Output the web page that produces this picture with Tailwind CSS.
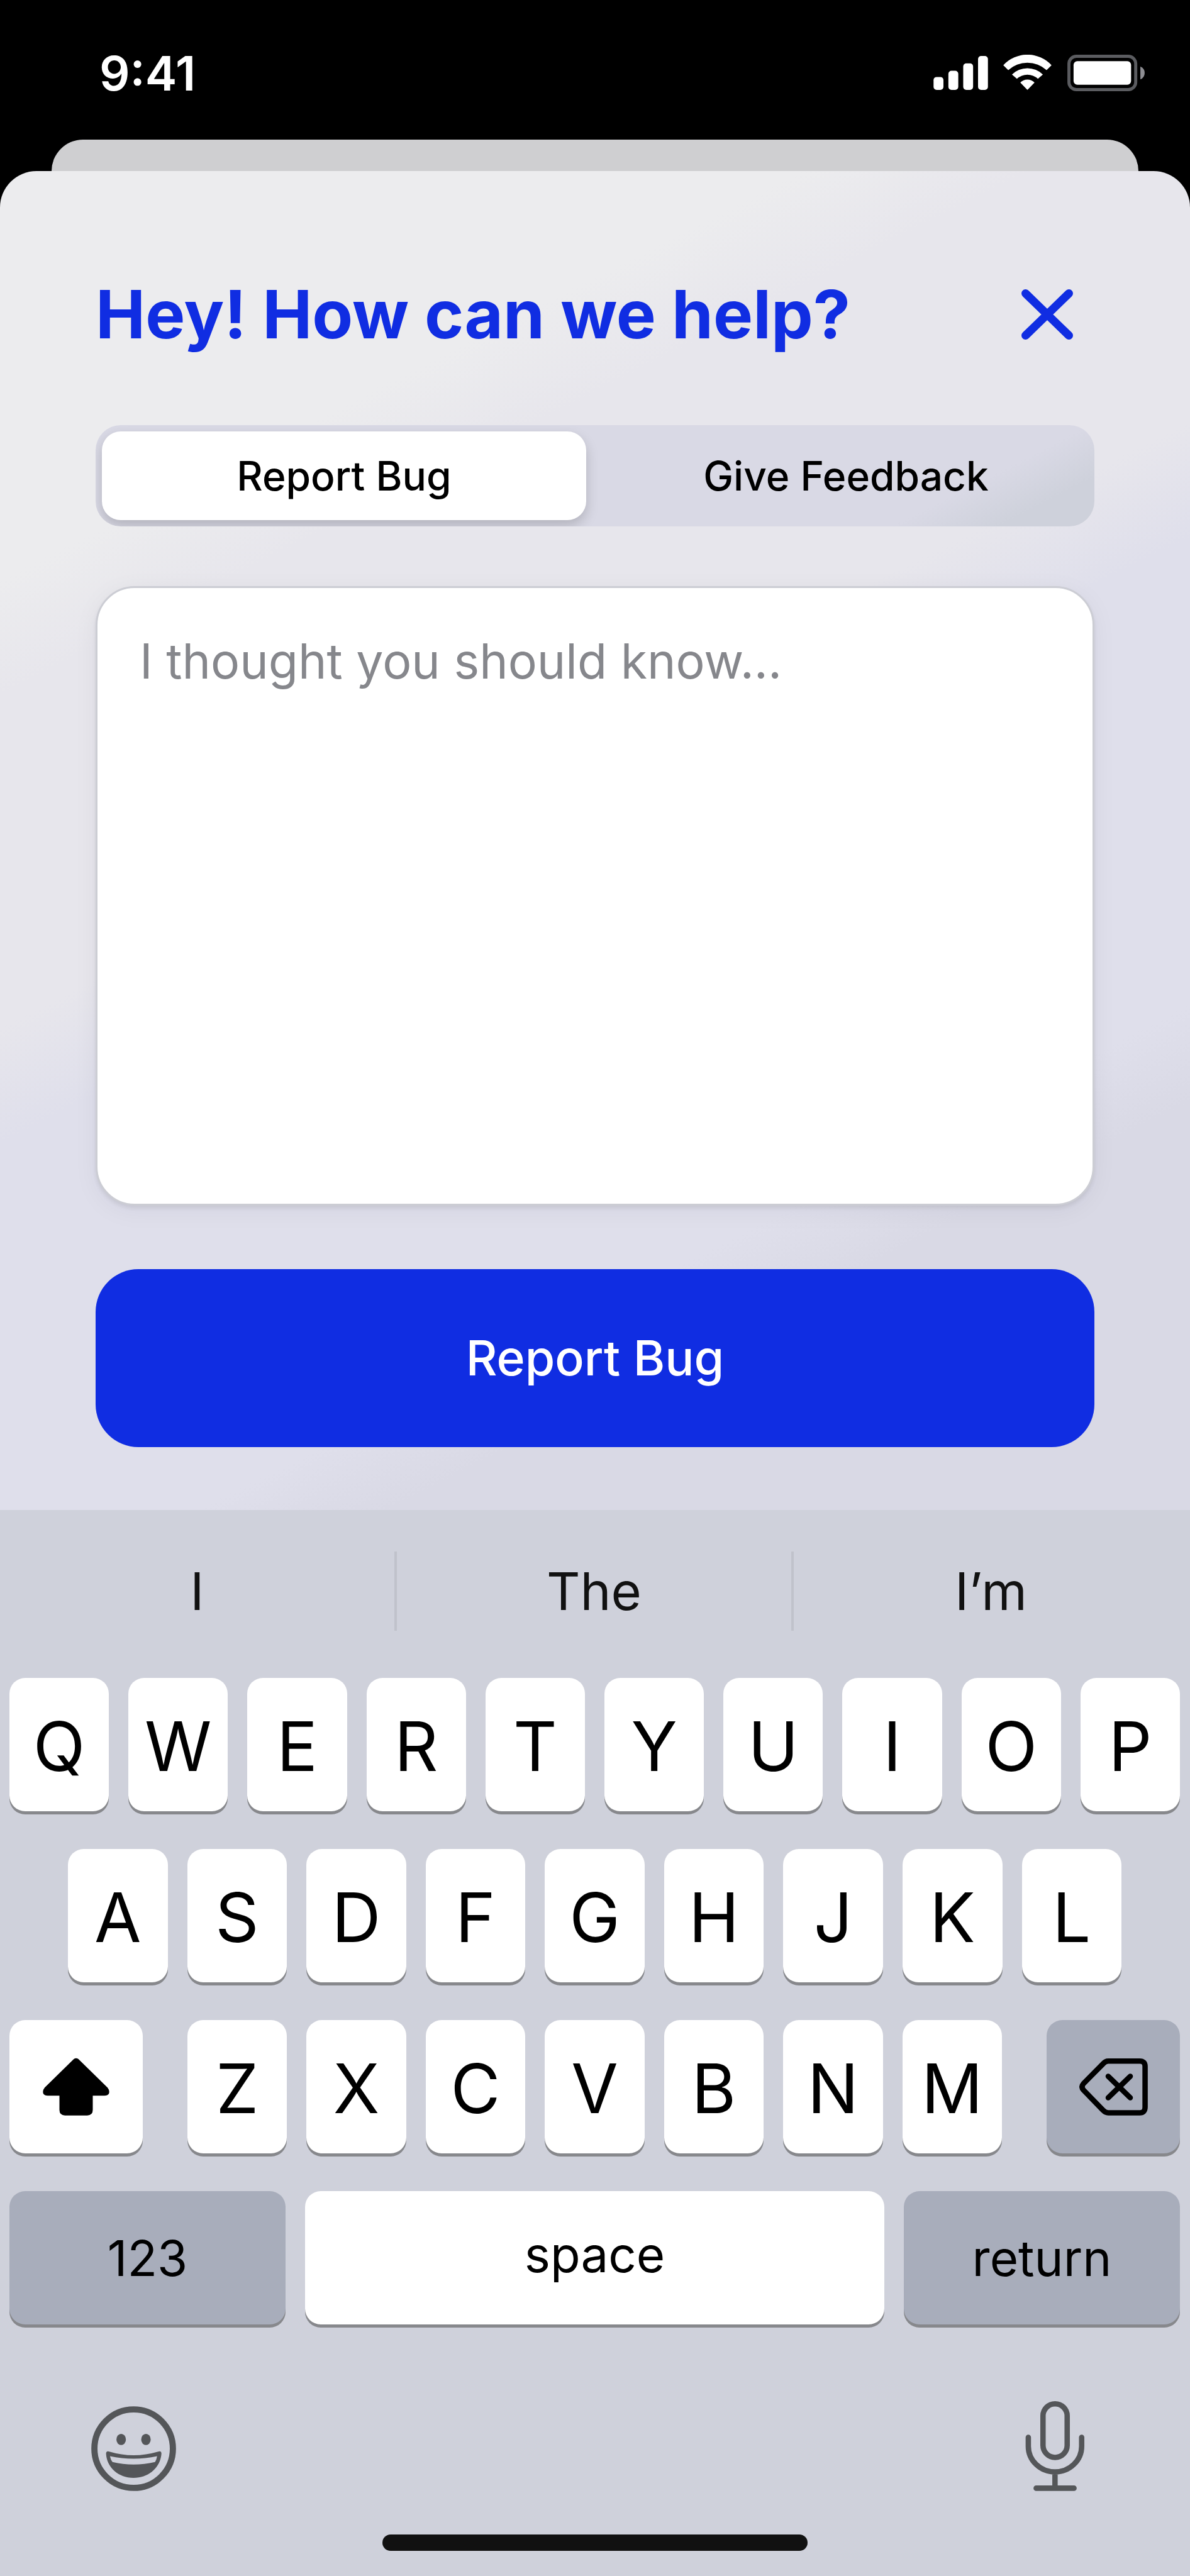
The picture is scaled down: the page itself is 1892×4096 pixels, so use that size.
<!DOCTYPE html>
<html lang="en">
<head>
    <meta charset="UTF-8">
    <meta name="viewport" content="width=device-width, initial-scale=1.0">
    <title>Report Bug</title>
    <script src="https://cdn.jsdelivr.net/npm/@tailwindcss/browser@4"></script>
</head>
<body class="flex flex-col min-h-screen bg-black font-['Inter','Liberation_Sans',sans-serif]">

    <!-- Status bar -->
    <header class="flex justify-between items-start h-[222px] pt-[87px] pl-[158px] pr-[72px] text-white">
        <span class="text-[76px] leading-[58px] font-semibold">9:41</span>
        <div class="flex items-end gap-6">
            <svg class="w-[87px] h-[56px]" viewBox="0 0 88 57" fill="currentColor">
                <rect x="0" y="34" width="16" height="21" rx="5"/>
                <rect x="24" y="24" width="16" height="31" rx="5"/>
                <rect x="48" y="12" width="16" height="43" rx="5"/>
                <rect x="72" y="0" width="16" height="55" rx="5"/>
            </svg>
            <svg class="w-[78px] h-[58px]" viewBox="0 0 79 59" fill="currentColor">
                <path d="M0 17A53 53 0 0 1 78 17L70 25A46 46 0 0 0 8 25Z"/>
                <path d="M14 32A36 36 0 0 1 64 32L56 39A25 25 0 0 0 22 39Z"/>
                <path d="M27.500 45A16 16 0 0 1 50.500 45L40 56Q39 57.500 38 56Z"/>
            </svg>
            <svg class="w-[123px] h-[58px]" viewBox="0 0 125 59">
                <rect x="2.500" y="2.500" width="108" height="54" rx="12" fill="none" stroke="#5b5c60" stroke-width="5"/>
                <rect x="10" y="10.500" width="93" height="38" rx="6" fill="#fff"/>
                <path d="M118 19Q125 22 125 29.500T118 40Z" fill="#8e8e93"/>
            </svg>
        </div>
    </header>

    <!-- Card behind the sheet -->
    <div class="h-[50px] mx-[82px] rounded-t-[50px] bg-[#cfcfd1]"></div>

    <!-- Feedback sheet -->
    <main class="flex flex-col px-[152px] pt-[178px] pb-[100px] rounded-t-[58px] bg-[linear-gradient(153deg,#ececee_21%,#e7e6ec_27%,#e7e6ec_44%,#dfdfeb_50%,#dfdfeb_74%,#d9d9e5_79%)]">
        <div class="flex justify-between items-center h-[100px] pr-[34px]">
            <h1 class="text-[106px] leading-[100px] font-bold text-[#102de2]">Hey! How can we help?</h1>
            <button type="button" aria-label="Close">
                <svg class="w-[82px] h-[80px]" viewBox="0 0 82 80" fill="none" stroke="#102de2" stroke-width="13" stroke-linecap="round">
                    <path d="M6.500 6.500L75.500 73.500M75.500 6.500L6.500 73.500"/>
                </svg>
            </button>
        </div>

        <div role="tablist" class="flex gap-[28px] h-[161px] mt-[126px] p-[10px] rounded-[40px] overflow-hidden bg-[linear-gradient(153deg,#d9d9e5_83%,#ced1db_92%)] text-[64px] font-medium">
            <button type="button" role="tab" aria-selected="true" class="flex-1 rounded-[30px] bg-white shadow-[0_9px_20px_rgba(0,0,0,0.18)]">Report Bug</button>
            <button type="button" role="tab" aria-selected="false" class="flex-1">Give Feedback</button>
        </div>

        <textarea aria-label="Feedback" placeholder="I thought you should know..." class="block w-full h-[985px] mt-[95px] px-[67px] py-[68px] rounded-[62px] border-3 border-[#cccdd4] bg-white resize-none outline-none text-[77px] leading-[96px] placeholder:text-[#86878c] shadow-[0_4px_6px_rgba(0,0,0,0.08),0_8px_40px_rgba(0,0,60,0.05)]"></textarea>

        <button type="button" class="h-[283px] mt-[101px] rounded-[68px] bg-[#102de2] text-white text-[77px] font-medium">Report Bug</button>
    </main>

    <!-- Keyboard -->
    <section class="flex flex-col flex-1 bg-[#cfd1db] text-black">
        <div class="flex h-[267px] pt-[66px] pb-[75px] pr-[3px] text-[83px] text-[#111] divide-x-4 divide-[#c0c2cb]">
            <button type="button" class="flex-1">I</button>
            <button type="button" class="flex-1">The</button>
            <button type="button" class="flex-1">I’m</button>
        </div>

        <div class="flex flex-col gap-[60px] pl-[15px] pr-[16px]">
            <div class="flex gap-[31px] text-[108px]">
                <button type="button" class="flex-1 h-[212px] pt-[5px] rounded-[25px] bg-white shadow-[0_5px_0_#87888c]">Q</button>
                <button type="button" class="flex-1 h-[212px] pt-[5px] rounded-[25px] bg-white shadow-[0_5px_0_#87888c]">W</button>
                <button type="button" class="flex-1 h-[212px] pt-[5px] rounded-[25px] bg-white shadow-[0_5px_0_#87888c]">E</button>
                <button type="button" class="flex-1 h-[212px] pt-[5px] rounded-[25px] bg-white shadow-[0_5px_0_#87888c]">R</button>
                <button type="button" class="flex-1 h-[212px] pt-[5px] rounded-[25px] bg-white shadow-[0_5px_0_#87888c]">T</button>
                <button type="button" class="flex-1 h-[212px] pt-[5px] rounded-[25px] bg-white shadow-[0_5px_0_#87888c]">Y</button>
                <button type="button" class="flex-1 h-[212px] pt-[5px] rounded-[25px] bg-white shadow-[0_5px_0_#87888c]">U</button>
                <button type="button" class="flex-1 h-[212px] pt-[5px] rounded-[25px] bg-white shadow-[0_5px_0_#87888c]">I</button>
                <button type="button" class="flex-1 h-[212px] pt-[5px] rounded-[25px] bg-white shadow-[0_5px_0_#87888c]">O</button>
                <button type="button" class="flex-1 h-[212px] pt-[5px] rounded-[25px] bg-white shadow-[0_5px_0_#87888c]">P</button>
            </div>

            <div class="flex gap-[31px] px-[93px] text-[108px]">
                <button type="button" class="flex-1 h-[212px] pt-[5px] rounded-[25px] bg-white shadow-[0_5px_0_#87888c]">A</button>
                <button type="button" class="flex-1 h-[212px] pt-[5px] rounded-[25px] bg-white shadow-[0_5px_0_#87888c]">S</button>
                <button type="button" class="flex-1 h-[212px] pt-[5px] rounded-[25px] bg-white shadow-[0_5px_0_#87888c]">D</button>
                <button type="button" class="flex-1 h-[212px] pt-[5px] rounded-[25px] bg-white shadow-[0_5px_0_#87888c]">F</button>
                <button type="button" class="flex-1 h-[212px] pt-[5px] rounded-[25px] bg-white shadow-[0_5px_0_#87888c]">G</button>
                <button type="button" class="flex-1 h-[212px] pt-[5px] rounded-[25px] bg-white shadow-[0_5px_0_#87888c]">H</button>
                <button type="button" class="flex-1 h-[212px] pt-[5px] rounded-[25px] bg-white shadow-[0_5px_0_#87888c]">J</button>
                <button type="button" class="flex-1 h-[212px] pt-[5px] rounded-[25px] bg-white shadow-[0_5px_0_#87888c]">K</button>
                <button type="button" class="flex-1 h-[212px] pt-[5px] rounded-[25px] bg-white shadow-[0_5px_0_#87888c]">L</button>
            </div>

            <div class="flex gap-[71px]">
                <button type="button" aria-label="Shift" class="flex items-center justify-center w-[212px] h-[212px] rounded-[25px] bg-white shadow-[0_5px_0_#87888c]">
                    <svg class="w-[106px] h-[92px]" viewBox="0 0 108 93" fill="currentColor">
                        <path d="M50 2Q54 -1 58 2L105 48Q109 53 107 58Q105 61 100 61H81V84Q81 93 72 93H36Q27 93 27 84V61H8Q3 61 1 58Q-1 53 3 48Z"/>
                    </svg>
                </button>
                <div class="flex flex-1 gap-[31px] text-[108px]">
                    <button type="button" class="flex-1 h-[212px] pt-[5px] rounded-[25px] bg-white shadow-[0_5px_0_#87888c]">Z</button>
                    <button type="button" class="flex-1 h-[212px] pt-[5px] rounded-[25px] bg-white shadow-[0_5px_0_#87888c]">X</button>
                    <button type="button" class="flex-1 h-[212px] pt-[5px] rounded-[25px] bg-white shadow-[0_5px_0_#87888c]">C</button>
                    <button type="button" class="flex-1 h-[212px] pt-[5px] rounded-[25px] bg-white shadow-[0_5px_0_#87888c]">V</button>
                    <button type="button" class="flex-1 h-[212px] pt-[5px] rounded-[25px] bg-white shadow-[0_5px_0_#87888c]">B</button>
                    <button type="button" class="flex-1 h-[212px] pt-[5px] rounded-[25px] bg-white shadow-[0_5px_0_#87888c]">N</button>
                    <button type="button" class="flex-1 h-[212px] pt-[5px] rounded-[25px] bg-white shadow-[0_5px_0_#87888c]">M</button>
                </div>
                <button type="button" aria-label="Delete" class="flex items-center justify-center w-[212px] h-[212px] rounded-[25px] bg-[#a8adbb] shadow-[0_5px_0_#87888c]">
                    <svg class="w-[109px] h-[91px]" viewBox="182 187 332 278" fill="none" stroke="currentColor" stroke-width="26" stroke-linecap="round">
                        <path d="M202 309L297 213Q308 200 322 200H475Q501 200 501 226V424Q501 451 475 451H322Q308 451 297 439L202 341Q188 325 202 309Z"/>
                        <path d="M322 274L429 378M429 274L322 378"/>
                    </svg>
                </button>
            </div>

            <div class="flex gap-[31px] text-[78px]">
                <button type="button" class="w-[439px] h-[212px] rounded-[25px] bg-[#a8adbb] shadow-[0_5px_0_#87888c]">123</button>
                <button type="button" class="flex-1 h-[212px] pb-[12px] rounded-[25px] bg-white shadow-[0_5px_0_#87888c]">space</button>
                <button type="button" class="w-[439px] h-[212px] rounded-[25px] bg-[#a8adbb] shadow-[0_5px_0_#87888c]">return</button>
            </div>
        </div>

        <div class="flex justify-between items-end mt-[122px] pl-[145px] pr-[167px] text-[#545659]">
            <button type="button" aria-label="Emoji">
                <svg class="w-[135px] h-[135px]" viewBox="140 130 411 411" fill="currentColor">
                    <circle cx="345.500" cy="335.500" r="190" fill="none" stroke="currentColor" stroke-width="30"/>
                    <ellipse cx="285" cy="291" rx="23" ry="27"/>
                    <ellipse cx="405" cy="291" rx="23" ry="27"/>
                    <path fill-rule="evenodd" d="M212 360Q212 345 228 350Q345 385 464 350Q480 345 480 360C475 425 420 477 345 477C270 477 215 425 212 360ZM231 372Q234 390 243 400Q345 424 449 400Q456 390 459 372Q345 396 231 372Z"/>
                </svg>
            </button>
            <button type="button" aria-label="Dictate">
                <svg class="w-[95px] h-[143px]" viewBox="164 102 289 435" fill="none" stroke="currentColor" stroke-width="26" stroke-linecap="round">
                    <rect x="250" y="115" width="117" height="259" rx="58"/>
                    <path d="M179 277V320A129 124 0 0 0 437 320V277M308 445V523M217 523H400"/>
                </svg>
            </button>
        </div>

        <div class="self-center w-[676px] h-[26px] mt-auto mb-[40px] rounded-full bg-[#111]"></div>
    </section>

</body>
</html>
